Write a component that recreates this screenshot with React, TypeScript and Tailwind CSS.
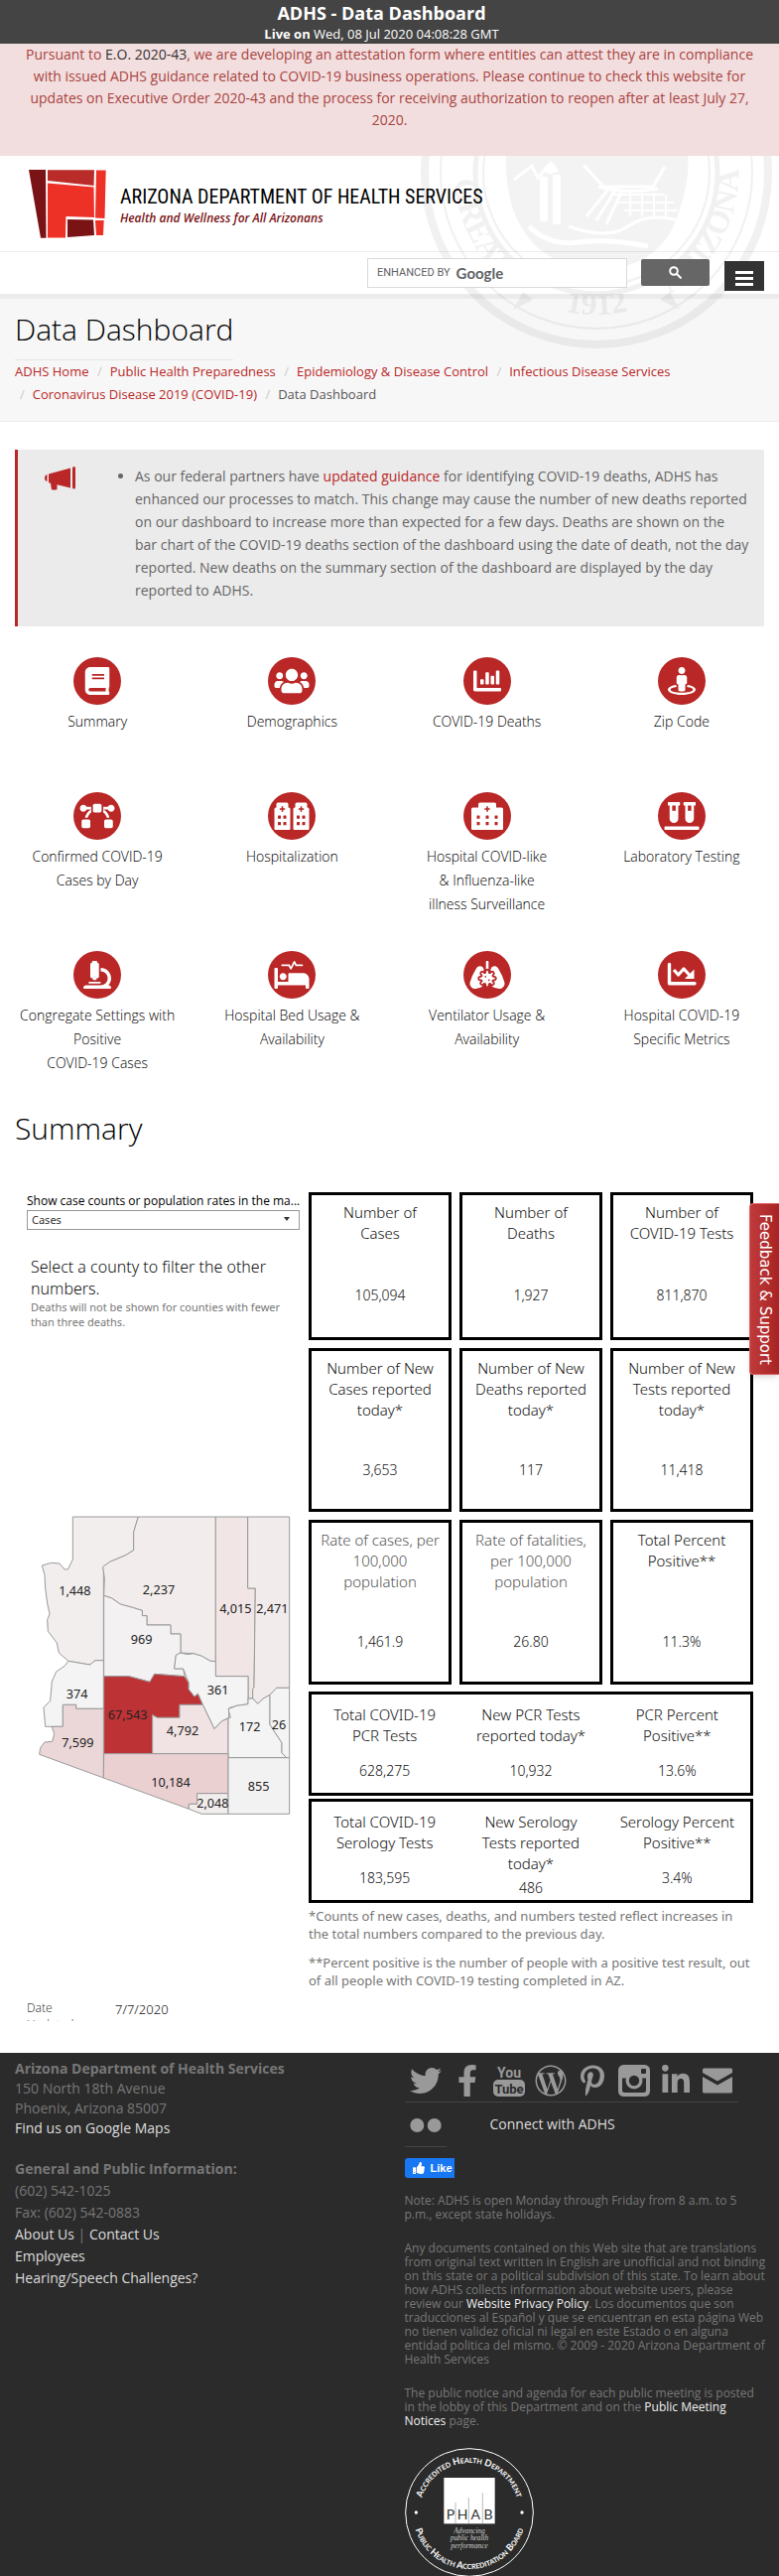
import React from "react";
import {
  FaBezierCurve,
  FaBook,
  FaChartBar,
  FaFacebookF,
  FaLinkedinIn,
  FaLungsVirus,
  FaMicroscope,
  FaPinterestP,
  FaProcedures,
  FaStreetView,
  FaThumbsUp,
  FaTwitter,
  FaUsers,
  FaVials,
  FaWordpressSimple,
} from "react-icons/fa";

type IconProps = { className?: string };

function Building({ x, w, cols }: { x: number; w: number; cols: number[] }) {
  const mid = x + w / 2;
  const top = w > 20 ? 9 : 6;
  return (
    <g>
      <path
        fill="currentColor"
        d={`M${x} 27V7q0-1.500 1.500-1.500H${mid - top}V2q0-1.500 1.500-1.500H${mid + top - 1.5}q1.500 0 1.500 1.500V5.500H${x + w - 1.5}q1.500 0 1.500 1.500V27q0 1-1 1H${x + 1}q-1 0-1-1z`}
      />
      <path stroke="#b92727" strokeWidth="1.600" d={`M${mid - 2.7} 7h5.400M${mid} 4.300v5.400`} />
      {cols.map((c) => (
        <g key={c} fill="#b92727">
          <rect x={c} y="13.500" width="3" height="3.200" rx=".5" />
          <rect x={c} y="20" width="3" height="3.200" rx=".5" />
        </g>
      ))}
    </g>
  );
}

function HospitalIcon({ className }: IconProps) {
  return (
    <svg viewBox="0 0 36 28" className={className} aria-hidden="true">
      <Building x={2} w={32} cols={[7.5, 16.5, 25.5]} />
    </svg>
  );
}

function HospitalsIcon({ className }: IconProps) {
  return (
    <svg viewBox="0 0 36 28" className={className} aria-hidden="true">
      <Building x={0.5} w={16} cols={[4, 9.5]} />
      <Building x={19.5} w={16} cols={[23, 28.5]} />
    </svg>
  );
}

function DownTrendIcon({ className }: IconProps) {
  return (
    <svg viewBox="0 0 36 28" className={className} fill="none" stroke="currentColor" aria-hidden="true">
      <path d="M5.500 3.500V22.700H31" strokeWidth="3.400" strokeLinecap="round" strokeLinejoin="round" />
      <path d="M10 9l4.500 5 5.500-6 7 7.500" strokeWidth="3.200" strokeLinejoin="round" />
      <path d="M30.500 8.500V18H21z" fill="currentColor" stroke="none" />
    </svg>
  );
}

const topics: { label: string[]; Icon: React.ComponentType<IconProps> }[] = [
  { label: ["Summary"], Icon: FaBook },
  { label: ["Demographics"], Icon: FaUsers },
  { label: ["COVID-19 Deaths"], Icon: FaChartBar },
  { label: ["Zip Code"], Icon: FaStreetView },
  { label: ["Confirmed COVID-19", "Cases by Day"], Icon: FaBezierCurve },
  { label: ["Hospitalization"], Icon: HospitalsIcon },
  { label: ["Hospital COVID-like", "& Influenza-like", "illness Surveillance"], Icon: HospitalIcon },
  { label: ["Laboratory Testing"], Icon: FaVials },
  { label: ["Congregate Settings with", "Positive", "COVID-19 Cases"], Icon: FaMicroscope },
  { label: ["Hospital Bed Usage &", "Availability"], Icon: FaProcedures },
  { label: ["Ventilator Usage &", "Availability"], Icon: FaLungsVirus },
  { label: ["Hospital COVID-19", "Specific Metrics"], Icon: DownTrendIcon },
];

function StateSeal() {
  return (
    <svg
      viewBox="0 0 356 356"
      className="pointer-events-none absolute -top-[161px] right-1.5 h-[356px] w-[356px] opacity-5"
      aria-hidden="true"
    >
      <defs>
        <path id="seal-rim" d="M35 178a143 143 0 0 0 286 0" />
      </defs>
      <g fill="none" stroke="#000">
        <circle cx="178" cy="178" r="173" strokeWidth="8" />
        <circle cx="178" cy="178" r="157" strokeWidth="2" />
        <circle cx="178" cy="178" r="122" strokeWidth="5" />
        <circle cx="178" cy="178" r="114" strokeWidth="2" />
      </g>
      <g fontFamily="'Liberation Serif', serif" fontWeight="700" fontSize="32">
        <text><textPath href="#seal-rim" startOffset="14%" textAnchor="middle">GREAT</textPath></text>
        <text><textPath href="#seal-rim" startOffset="50%" textAnchor="middle">1912</textPath></text>
        <text><textPath href="#seal-rim" startOffset="84%" textAnchor="middle">ARIZONA</textPath></text>
      </g>
      <path d="M94 316l10-18 10 8zM262 316l-10-18-10 8z" />
      <path d="M87 160q-2 60 30 92q32 28 82 22q44-8 60-50q14-40 11-64z" opacity=".8" />
      <g fill="none" stroke="#fff" strokeWidth="3">
        <path d="M95 185l18-14 6 12 14-16" />
        <path d="M125 182v45M138 180v50M128 178q4-12 8 0" strokeWidth="8" />
        <path d="M165 170l20 22h50l12-20M180 192q28 8 60 2M168 222l24-30M178 226l20-32M188 230l16-34M150 232q40 14 60 0t50-6" />
        <path d="M196 200h50M200 208h56M206 216h54M212 198v24M224 198v24M236 198v24M248 200v22" strokeWidth="2" />
        <path d="M110 232q20 20 50 16t70 4" strokeWidth="5" />
      </g>
    </svg>
  );
}

function Logo() {
  return (
    <svg viewBox="29 171 78 69" className="h-[69px] w-[78px] shrink-0" role="img" aria-label="ADHS">
      <path fill="#7a1316" d="M29 171H46L46.500 239.700H41z" />
      <path fill="#b92c2a" d="M48 171.300H95L94.500 187 48 182z" />
      <path fill="#ee3127" d="M97 171.600H106.700L105.500 220 96 219.500z" />
      <path fill="#ee3127" d="M48 184.500L94.500 188.500 95 219 66.500 218 66 239.500H48z" />
      <path fill="#7a1316" d="M68 221L94 221.500 95 237 68 239z" />
      <path fill="#ee3127" d="M96 222H104.700L104 237H97z" />
    </svg>
  );
}

const crumbs = [
  "ADHS Home",
  "Public Health Preparedness",
  "Epidemiology & Disease Control",
  "Infectious Disease Services",
  "Coronavirus Disease 2019 (COVID-19)",
];

function Header() {
  return (
    <header className="relative overflow-hidden">
      <div className="flex h-[97px] items-center gap-3.5 border-b border-[#ebebeb] bg-white pl-[29px]">
        <Logo />
        <div className="relative z-10 pt-1">
          <div className="font-['Liberation_Sans_Narrow','Roboto_Condensed',Roboto,sans-serif] text-[20px] leading-[26px] text-black">
            ARIZONA DEPARTMENT OF HEALTH SERVICES
          </div>
          <div className="text-[12px] leading-[18px] font-semibold text-[#7a1316] italic">
            Health and Wellness for All Arizonans
          </div>
        </div>
      </div>
      <div className="flex h-[42px] justify-end bg-white pr-[15px]">
        <form className="relative z-10 flex items-start" onSubmit={(e) => e.preventDefault()}>
          <label className="relative mt-1.5 block">
            <span className="pointer-events-none absolute inset-y-0 left-2.5 flex items-center gap-1.5 text-[#5f6368]">
              <span className="font-[Roboto] text-[11px]">ENHANCED BY</span>
              <span className="font-[Lato] text-[15px] font-bold">Google</span>
            </span>
            <input aria-label="search" type="text" className="h-[30px] w-[262px] border border-[#d9d9d9] bg-white px-2" />
          </label>
          <button aria-label="Search" className="mt-[7px] ml-3.5 flex h-[27px] w-[69px] items-center justify-center rounded-xs bg-[#666]">
            <svg viewBox="0 0 13 13" className="h-[13px] w-[13px]" fill="none" stroke="#fff" strokeWidth="2">
              <circle cx="5" cy="5" r="3.800" />
              <path d="M8 8l4.500 4.500" />
            </svg>
          </button>
        </form>
        <button aria-label="Menu" className="relative z-10 mt-[9px] ml-[15px] flex h-[30px] w-10 flex-col items-center gap-[3px] bg-[#333] pt-2.5">
          <span className="h-[3px] w-[18px] bg-white" />
          <span className="h-[3px] w-[18px] bg-white" />
          <span className="h-[3px] w-[18px] bg-white" />
        </button>
      </div>
      <div className="border-t-[5px] border-b border-t-[#ebebeb] border-b-[#ebebeb] bg-[#f7f7f7] px-[15px] pt-2.5 pb-[15px]">
        <h1 className="w-fit border-b border-[#e5e5e5] pb-2.5 text-[30px] leading-[41px] font-light text-black">
          Data Dashboard
        </h1>
        <nav aria-label="Breadcrumb" className="relative z-10">
          <ol className="text-[13px] leading-[23px]">
            {crumbs.map((c, i) => (
              <React.Fragment key={c}>
                <li className="inline-block">
                  {i > 0 && <span className="pr-2 pl-[5px] text-[#ccc]">/</span>}
                  <a href="#" className="text-[#b92727]">{c}</a>
                </li>{" "}
              </React.Fragment>
            ))}
            <li className="inline-block">
              <span className="pr-2 pl-[5px] text-[#ccc]">/</span>
              <span className="text-[#555]">Data Dashboard</span>
            </li>
          </ol>
        </nav>
      </div>
      <StateSeal />
    </header>
  );
}

function Notice() {
  return (
    <section className="mx-[15px] mt-7 flex h-[178px] border-l-[3px] border-[#b92727] bg-[#ebebeb] pt-[15px] pr-3.5">
      <svg viewBox="0 0 31 24" className="mt-0.5 ml-[27px] h-6 w-[31px] shrink-0" fill="#b92727" aria-hidden="true">
        <path d="M0 11.500Q0 8.500 2.500 8v7Q0 14.500 0 11.500zM4 7.500L26 1.500V21.500L12.500 18.200V22.500Q12.500 23.500 11 23.500H8Q7 23.500 6.800 22.500L6 16.700 4 16.200z" />
        <rect x="28" y="0" width="3" height="22.500" rx="1.500" />
      </svg>
      <ul className="ml-[60px] list-disc text-[14px] leading-[23px] text-[#666]">
        <li>
          As our federal partners have <a href="#" className="text-[#b92727]">updated guidance</a> for identifying
          COVID-19 deaths, ADHS has enhanced our processes to match. This change may cause the number of new deaths
          reported on our dashboard to increase more than expected for a few days. Deaths are shown on the bar&nbsp;chart
          of the COVID-19 deaths section of the dashboard using the date of death, not the day reported. New deaths
          on the summary section of the dashboard are displayed by the day reported to ADHS.
        </li>
      </ul>
    </section>
  );
}

function Topics() {
  return (
    <nav aria-label="Dashboard sections" className="mt-[31px] grid grid-cols-4 gap-y-[35px]">
      {topics.map(({ label, Icon }) => (
        <a key={label[0]} href="#" className="flex min-h-[101px] flex-col items-center text-center text-[14px] leading-6 font-light text-black">
          <span className="mb-[5px] flex h-12 w-12 items-center justify-center rounded-full bg-[#b92727] text-white">
            <Icon className="h-7 w-9" />
          </span>
          {label.map((l) => (
            <span key={l}>{l}</span>
          ))}
        </a>
      ))}
    </nav>
  );
}

const counties = [
  { name: "Mohave", fill: "#f2eeee", n: "1,448", x: 226, y: 308, d: "M220 84H418L404 130V185L380 200 332 220 313 235V518H288L272 531 207 520 178 495 172 465 145 430 143 395 150 378 143 345 137 300 135 260 127 231 155 223 180 225 195 243H205L220 213z" },
  { name: "Coconino", fill: "#f2ecec", n: "2,237", x: 480, y: 305, d: "M418 84H652V521L636 520 610 505 585 497 546 495V438H516V411H444V383H430V367L400 358 364 348 338 330 314 322 316 270 311 235 332 220 380 200 404 185V130z" },
  { name: "Navajo", fill: "#f1e5e5", n: "4,015", x: 712, y: 360, d: "M652 84H749V300H772L768 600 764 604V633H750V566H652z" },
  { name: "Apache", fill: "#f2ebeb", n: "2,471", x: 823, y: 360, d: "M749 84H875V601H836L816 622 795 634 779 649 764 633V604L768 600 772 300H749z" },
  { name: "Yavapai", fill: "#f3f1f2", n: "969", x: 428, y: 455, d: "M314 322L338 330 364 348 400 358 430 367V383H444V411H516V438H546V495L532 502 527 543H554L558 566 467 559 453 583 390 566H314z" },
  { name: "Gila", fill: "#f4f4f4", n: "361", x: 659, y: 608, d: "M546 495L565 500 585 497 610 505 636 520 652 521V566H750V650L715 655 692 662V691L670 702 648 725 613 652 598 619 588 628 570 605V585L554 543H527L532 502z" },
  { name: "La Paz", fill: "#f4f4f4", n: "374", x: 233, y: 620, d: "M207 520L272 531 288 518H313V664H230V652H190V718H137L132 660 152 640 157 582 170 552 195 535z" },
  { name: "Maricopa", fill: "#bd3335", n: "67,543", x: 386, y: 681, d: "M314 566H390L453 583 467 559 558 566 570 585V605L588 628 598 619 613 652H543V691H475L461 683V800H314z" },
  { name: "Yuma", fill: "#ecd7d8", n: "7,599", x: 235, y: 765, d: "M190 652H230V664H313V873L119 802 122 782 135 765 158 763 164 740 157 718H190z" },
  { name: "Pinal", fill: "#f1e3e3", n: "4,792", x: 552, y: 729, d: "M461 683L475 691H543V652H613L648 725 670 702 690 693V800H461z" },
  { name: "Graham", fill: "#f4f4f4", n: "172", x: 755, y: 719, d: "M750 633H764L779 649 795 634 816 622V712L852 767V797L866 812H690V691H697L690 665 715 655 750 650z" },
  { name: "Greenlee", fill: "#f4f4f4", n: "26", x: 843, y: 711, d: "M816 622L836 601H875V812H866L852 797V767L816 712z" },
  { name: "Pima", fill: "#ebd0d2", n: "10,184", x: 516, y: 885, d: "M314 800H690V920H596V952H571V967L313 873z" },
  { name: "Santa Cruz", fill: "#f2eded", n: "2,048", x: 643, y: 950, d: "M596 920H690V982H610L571 967V952H596z" },
  { name: "Cochise", fill: "#f3f2f2", n: "855", x: 782, y: 897, d: "M690 812H875V982H690z" },
];

function CountyMap() {
  return (
    <svg viewBox="99 72 792 924" className="ml-[6px] h-[308px] w-[264px]" role="img" aria-label="Cases by county">
      {counties.map((c) => (
        <path key={c.name} d={c.d} fill={c.fill} stroke="#9a9a9a" strokeWidth="3" strokeLinejoin="round" />
      ))}
      <g fontFamily="'Noto Sans', sans-serif" fontSize="38" fill="#222" textAnchor="middle">
        {counties.map((c) => (
          <text key={c.name} x={c.x} y={c.y + 14}>{c.n}</text>
        ))}
      </g>
    </svg>
  );
}

type Stat = { label: string[]; value: string; muted?: boolean };

const cardRows: { box: string; lines: string; stats: Stat[] }[] = [
  {
    box: "h-[149px]",
    lines: "min-h-[44px]",
    stats: [
      { label: ["Number of", "Cases"], value: "105,094" },
      { label: ["Number of", "Deaths"], value: "1,927" },
      { label: ["Number of", "COVID-19 Tests"], value: "811,870" },
    ],
  },
  {
    box: "h-[165px]",
    lines: "min-h-[63px]",
    stats: [
      { label: ["Number of New", "Cases reported", "today*"], value: "3,653" },
      { label: ["Number of New", "Deaths reported", "today*"], value: "117" },
      { label: ["Number of New", "Tests reported", "today*"], value: "11,418" },
    ],
  },
  {
    box: "h-[166px]",
    lines: "min-h-[63px]",
    stats: [
      { label: ["Rate of cases, per", "100,000", "population"], value: "1,461.9", muted: true },
      { label: ["Rate of fatalities,", "per 100,000", "population"], value: "26.80", muted: true },
      { label: ["Total Percent", "Positive**"], value: "11.3%" },
    ],
  },
];

const testRows: Stat[][] = [
  [
    { label: ["Total COVID-19", "PCR Tests"], value: "628,275" },
    { label: ["New PCR Tests", "reported today*"], value: "10,932" },
    { label: ["PCR Percent", "Positive**"], value: "13.6%" },
  ],
  [
    { label: ["Total COVID-19", "Serology Tests"], value: "183,595" },
    { label: ["New Serology", "Tests reported", "today*"], value: "486" },
    { label: ["Serology Percent", "Positive**"], value: "3.4%" },
  ],
];

function Label({ lines }: { lines: string[] }) {
  return (
    <>
      {lines.map((l) => (
        <span key={l} className="block whitespace-nowrap">{l}</span>
      ))}
    </>
  );
}

function Stats() {
  return (
    <div className="min-w-0 flex-1 text-center text-[15px] leading-[21px] font-light text-[#111]">
      <div className="flex flex-col gap-2">
        {cardRows.map((row) => (
          <div key={row.box + row.stats[0].value} className="grid grid-cols-3 gap-2">
            {row.stats.map((s) => (
              <div key={s.value} className={`border-3 border-black pt-[7px] ${row.box}`}>
                <div className={`${row.lines} ${s.muted ? "text-[#555]" : ""}`}>
                  <Label lines={s.label} />
                </div>
                <div className="mt-[39px] text-[14px]">{s.value}</div>
              </div>
            ))}
          </div>
        ))}
      </div>
      <div className="mt-[7px] flex flex-col gap-[3px]">
        {testRows.map((row) => (
          <div key={row[0].value} className="grid h-[105px] grid-cols-3 border-3 border-black pt-2.5">
            {row.map((s) => (
              <div key={s.value}>
                <Label lines={s.label} />
                <div className={s.label.length > 2 ? "mt-[3px] text-[14px]" : "mt-3.5 text-[14px]"}>{s.value}</div>
              </div>
            ))}
          </div>
        ))}
      </div>
      <div className="mt-1 flex flex-col gap-[11px] text-left text-[13px] leading-[18px] font-normal text-[#777]">
        <p>*Counts of new cases, deaths, and numbers tested reflect increases in the&nbsp;total numbers compared to the previous day.</p>
        <p>**Percent positive is the number of people with a positive test result, out of&nbsp;all people with COVID-19 testing completed in AZ.</p>
      </div>
    </div>
  );
}

function Dashboard() {
  return (
    <section className="flex gap-[9px] pr-[26px] pl-[27px] font-['Noto_Sans',sans-serif]">
      <div className="flex w-[275px] shrink-0 flex-col">
        <label htmlFor="measure" className="font-['Open_Sans',sans-serif] text-[12px] leading-[18px] font-medium whitespace-nowrap text-black">
          Show case counts or population rates in the ma...
        </label>
        <div className="relative">
          <select id="measure" className="block h-5 w-full appearance-none border border-[#999] bg-white px-1 text-[11px] leading-[18px] text-[#333]">
            <option>Cases</option>
          </select>
          <svg viewBox="0 0 6 4" className="pointer-events-none absolute top-[7px] right-2.5 h-1 w-1.5" aria-hidden="true">
            <path d="M0 0h6L3 4z" fill="#333" />
          </svg>
        </div>
        <p className="mt-[26px] pl-1 text-[16px] leading-[22px] font-light text-[#111]">Select a county to filter the other numbers.</p>
        <p className="pl-1 text-[11px] leading-[15px] text-[#777]">Deaths will not be shown for counties with fewer than&nbsp;three deaths.</p>
        <div className="mt-[185px]">
          <CountyMap />
        </div>
        <div className="mt-[182px] flex h-[22px] gap-[62px] overflow-hidden text-[12px] leading-[17px] font-light">
          <span className="w-[27px] text-[#444]">Date Updated</span>
          <span className="pt-0.5 text-[13px] text-[#111]">7/7/2020</span>
        </div>
      </div>
      <Stats />
    </section>
  );
}

function YoutubeIcon({ className }: IconProps) {
  return (
    <svg viewBox="0 0 32 32" className={className} fill="currentColor" aria-hidden="true">
      <text x="16" y="12.500" textAnchor="middle" fontFamily="'Liberation Sans Narrow', Roboto, sans-serif" fontWeight="700" fontSize="14">You</text>
      <rect x="0" y="15" width="32" height="17" rx="5" />
      <text x="16" y="28.500" textAnchor="middle" fill="#2b2b2b" fontFamily="'Liberation Sans Narrow', Roboto, sans-serif" fontWeight="700" fontSize="13">Tube</text>
    </svg>
  );
}

function InstagramIcon({ className }: IconProps) {
  return (
    <svg viewBox="0 0 32 32" className={className} aria-hidden="true">
      <rect width="32" height="32" rx="5.500" fill="currentColor" />
      <path d="M4 13.500H28V25.500Q28 28 25.500 28H6.500Q4 28 4 25.500z" fill="#2b2b2b" />
      <circle cx="16" cy="16" r="8.500" fill="currentColor" />
      <circle cx="16" cy="16" r="5.200" fill="#2b2b2b" />
      <rect x="23" y="4" width="5" height="5" rx="1" fill="#2b2b2b" />
    </svg>
  );
}

function MailIcon({ className }: IconProps) {
  return (
    <svg viewBox="0 0 32 32" className={className} fill="currentColor" aria-hidden="true">
      <path d="M1 5Q1 3.500 2.500 3.500H29.500Q31 3.500 31 5V8L16 16.500 1 8z" />
      <path d="M1 12L16 20.500 31 12V27Q31 28.500 29.500 28.500H2.500Q1 28.500 1 27z" />
    </svg>
  );
}

function FlickrIcon({ className }: IconProps) {
  return (
    <svg viewBox="0 0 32 32" className={className} fill="currentColor" aria-hidden="true">
      <circle cx="7.300" cy="16" r="7" />
      <circle cx="24.700" cy="16" r="7" />
    </svg>
  );
}

const socials: { name: string; Icon: React.ComponentType<IconProps> }[] = [
  { name: "Twitter", Icon: FaTwitter },
  { name: "Facebook", Icon: FaFacebookF },
  { name: "YouTube", Icon: YoutubeIcon },
  { name: "WordPress", Icon: FaWordpressSimple },
  { name: "Pinterest", Icon: FaPinterestP },
  { name: "Instagram", Icon: InstagramIcon },
  { name: "LinkedIn", Icon: FaLinkedinIn },
  { name: "Email", Icon: MailIcon },
];

function AccreditationSeal() {
  return (
    <svg viewBox="0 0 390 390" className="h-[130px] w-[130px]" role="img" aria-label="Public Health Accreditation Board">
      <defs>
        <path id="phab-top" d="M45 195a150 150 0 0 1 300 0" />
        <path id="phab-bottom" d="M24 195a171 171 0 0 0 342 0" />
      </defs>
      <circle cx="195" cy="195" r="193" fill="none" stroke="#fff" strokeWidth="3" />
      <g fill="#fff" fontFamily="Lato, sans-serif" fontWeight="700" fontSize="28" style={{ fontVariant: "small-caps" }}>
        <text><textPath href="#phab-top" startOffset="50%" textAnchor="middle">Accredited Health Department</textPath></text>
        <text><textPath href="#phab-bottom" startOffset="50%" textAnchor="middle">Public Health Accreditation Board</textPath></text>
      </g>
      <circle cx="34" cy="195" r="5" fill="#fff" />
      <circle cx="354" cy="195" r="5" fill="#fff" />
      <rect x="118" y="90" width="154" height="139" fill="#fff" />
      <path d="M153 165v63M193 150v78M235 136v92" stroke="#999" strokeWidth="2" />
      <g textAnchor="middle" fontFamily="Lato, sans-serif" fontSize="42" fill="#333">
        <text x="138" y="216">P</text>
        <text x="174" y="216">H</text>
        <text x="214" y="216">A</text>
        <text x="252" y="216">B</text>
      </g>
      <g fill="#ccc" fontFamily="'Liberation Serif', serif" fontStyle="italic" fontSize="22" textAnchor="middle">
        <text x="195" y="257">Advancing</text>
        <text x="195" y="280">public health</text>
        <text x="195" y="303">performance</text>
      </g>
    </svg>
  );
}

function Footer() {
  return (
    <footer className="mt-8 flex bg-[#2b2b2b] text-[#777]">
      <div className="w-1/2 pt-1.5 pl-[15px] text-[14px]">
        <address className="leading-5 not-italic">
          <strong>Arizona Department of Health Services</strong>
          <br />
          150 North 18th Avenue
          <br />
          Phoenix, Arizona 85007
          <br />
          <a href="#" className="text-[#ddd]">Find us on Google Maps</a>
        </address>
        <div className="mt-5 leading-[22px]">
          <strong>General and Public Information:</strong>
          <br />
          (602) 542-1025
          <br />
          Fax: (602) 542-0883
          <br />
          <a href="#" className="text-[#ddd]">About Us</a> | <a href="#" className="text-[#ddd]">Contact Us</a>
          <br />
          <a href="#" className="text-[#ddd]">Employees</a>
          <br />
          <a href="#" className="text-[#ddd]">Hearing/Speech Challenges?</a>
        </div>
      </div>
      <div className="w-1/2 pr-2 pl-[15px] text-[12px] leading-[14px]">
        <div className="flex w-[336px] border-b border-[#444] pt-3 pb-[5px] text-[#999]">
          {socials.map(({ name, Icon }) => (
            <a key={name} href="#" aria-label={name} className="flex w-[42px] justify-center">
              <Icon className="h-8 w-8" />
            </a>
          ))}
        </div>
        <div className="flex items-start">
          <a href="#" aria-label="Flickr" className="flex h-[45px] w-[42px] justify-center border-b border-[#444] pt-[7px] text-[#999]">
            <FlickrIcon className="h-8 w-8" />
          </a>
          <a href="#" className="ml-11 pt-3 text-[14px] leading-5 text-[#ddd]">Connect with ADHS</a>
        </div>
        <button className="mt-[11px] flex h-5 w-[50px] items-center gap-1.5 rounded-l-[3px] bg-[#1877f2] pl-2 font-['Liberation_Sans',sans-serif] text-[11px] font-bold text-white">
          <FaThumbsUp className="h-3 w-3 shrink-0" />
          Like
        </button>
        <p className="mt-4">Note: ADHS is open Monday through Friday from 8 a.m. to 5 p.m.,&nbsp;except state holidays.</p>
        <p className="mt-5">
          Any documents contained on this Web site that are translations from original text written in English are
          unofficial and not binding on this state or a political subdivision of this state. To learn about how ADHS
          collects information about website users, please review&nbsp;our{" "}
          <a href="#" className="font-medium text-[#eee]">Website Privacy Policy</a>. Los documentos que son
          traducciones al Español y que se encuentran en esta página Web no tienen validez oficial ni legal en este
          Estado o en alguna entidad politica del mismo. © 2009 - 2020 Arizona Department of Health Services
        </p>
        <p className="mt-5 mb-5">
          The public notice and agenda for each public meeting is posted in&nbsp;the lobby of this Department and on the{" "}
          <a href="#" className="font-medium text-[#eee]">Public Meeting Notices</a>&nbsp;page.
        </p>
        <AccreditationSeal />
      </div>
    </footer>
  );
}

export default function App() {
  return (
    <div className="relative bg-white font-['Open_Sans',sans-serif]">
      <div className="h-11 bg-[#444] pr-4 text-center text-white">
        <div className="text-[18px] leading-[26px] font-bold">ADHS - Data Dashboard</div>
        <div className="text-[13px] leading-4">
          <strong>Live on</strong> Wed, 08 Jul 2020 04:08:28 GMT
        </div>
      </div>
      <div className="h-[113px] bg-[#f2dede] px-6 text-center text-[14px] leading-[22px] text-[#a94442]">
        Pursuant to <a href="#" className="text-[#333]">E.O. 2020-43</a>, we are developing an attestation form where
        entities can attest they are in compliance with issued ADHS guidance related to COVID-19 business operations.
        Please continue to check this website for updates on Executive Order 2020-43 and the process for receiving
        authorization to reopen after at least July 27, 2020.
      </div>
      <Header />
      <main>
        <Notice />
        <Topics />
        <h2 className="mt-8 mb-[42px] px-[15px] text-[30px] leading-[44px] font-light text-black">Summary</h2>
        <Dashboard />
      </main>
      <Footer />
      <button className="absolute top-[1212px] right-0 flex h-[173px] w-[30px] items-center justify-center rounded-l-sm border border-r-0 border-[#d66] bg-linear-to-r from-[#c03a3a] to-[#a82424] font-['DejaVu_Sans',sans-serif] text-[15px] text-white shadow-md [writing-mode:vertical-rl]">
        Feedback &amp; Support
      </button>
    </div>
  );
}
